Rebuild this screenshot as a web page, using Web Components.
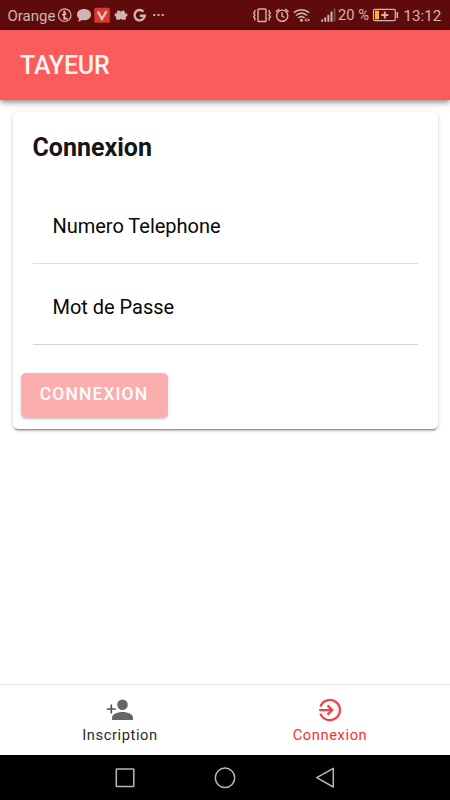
<!DOCTYPE html>
<html lang="fr">
<head>
<meta charset="utf-8">
<title>Tayeur</title>
<style>
html,body{margin:0;height:100%;background:#fff;overflow:hidden}
body{font-family:Roboto,"Liberation Sans",sans-serif;color:#000}
</style>
</head>
<body>
<tayeur-app></tayeur-app>
<script>
const define = (name, html) => {
  const template = document.createElement('template');
  template.innerHTML = html;
  customElements.define(name, class extends HTMLElement {
    constructor() {
      super();
      this.attachShadow({mode: 'open'}).append(template.content.cloneNode(true));
    }
  });
};

define('status-bar', `
<style>
:host{display:flex;justify-content:space-between;height:30px;box-sizing:border-box;padding:0 9.500px 0 7.500px;background:#600b0b;color:#d3b3b3;border-bottom:1px solid #4f0808}
div{display:flex;align-items:center;height:30px}
svg{display:block;flex:none;fill:none;stroke:#d3b3b3;stroke-width:1.4}
.f{fill:#d3b3b3;stroke:none}
span{display:block;white-space:nowrap;line-height:30px}
.op{width:49.500px;font-size:15px;padding-top:2px}
.pc{width:34px;margin-left:2px;font-size:14.700px}
.tm{width:37px;margin-left:4.500px;font-size:15.2px;padding-top:2px}
</style>
<div>
  <span class="op">Orange</span>
  <svg width="110" height="30" viewBox="57 0 110 30">
    <circle cx="64.7" cy="15.2" r="6.3" stroke-width="1.2"/>
    <path d="M64.300 10.500v8.300h3.400M62.300 15l4-1.500" stroke-width="1.900"/>
    <path class="f" d="M84 9c4.2 0 7 2.300 7 5.700S88 20.300 84 20.300l-2-.2-3.700 1.900.7-3.400c-1.200-1-2-2.300-2-3.900C77 11.300 79.800 9 84 9z"/>
    <rect x="94.300" y="7.700" width="15.500" height="15" rx="1.500" fill="#d93a30" stroke="none"/>
    <path d="M97.800 11.500l4.100 7.500 4.700-7.900" stroke="#edc0bd" stroke-width="2.300"/>
    <path class="f" d="M114.700 13.500h2l.3-2.800h3l.8 1.200.8-1.200h3l.3 2.800h2.400v2.500l-1.200.6-.5 3.200h-3.300l-1.300-1-1.300 1h-3.300l-.5-3.200-1.200-.6z"/>
    <path d="M143.400 11.600A5.150 5.150 0 1 0 144.800 15.700H139.800" stroke-width="2.400"/>
    <path class="f" d="M153.300 14h2v2h-2zM157.500 14h2v2h-2zM161.700 14h2v2h-2z"/>
  </svg>
</div>
<div>
  <svg width="84" height="30" viewBox="252 0 84 30">
    <rect x="258" y="9" width="8" height="12.500" rx=".8"/>
    <path d="M254.800 10v2.200l-1.200 1 1.400 1.800-1.400 1.800 1.200 1v2.700M269.200 10v2.200l1.200 1-1.400 1.800 1.400 1.800-1.200 1v2.700"/>
    <circle cx="282.200" cy="15.700" r="5.600"/><path d="M282 12.300v3.700l2.600 1.500M276 11.800l3.200-2.900M285.300 8.900l3.200 2.900"/>
    <path d="M293.800 12.700c4.600-4 10.700-4 15.300 0M296 15.500c3.500-3 7.500-3 11 0M298.300 18c2-1.700 4.300-1.700 6.300 0" stroke-width="1.600"/>
    <circle class="f" cx="301.500" cy="20.300" r="1.500"/>
    <path class="f" d="M306.500 18v4l-2-2zM307.700 18l2.200 2-2.200 2z"/>
    <path class="f" d="M321.200 19.500h1.900v2.300h-1.900zM324.300 17.500h1.900v4.300h-1.900zM327.400 14.800h1.900v7h-1.900zM330.500 11.500h2v10.300h-2z"/>
    <path d="M334.500 8.500v13.300" stroke="#86504f" stroke-width="1.700"/>
  </svg>
  <span class="pc">20 %</span>
  <svg width="27" height="30" viewBox="372 0 27 30">
    <rect x="373.500" y="9.300" width="21.800" height="11.300" rx="1.300" stroke-width="1.200"/>
    <path d="M397.300 12v6" stroke-width="1.500"/>
    <rect x="375" y="10.700" width="4" height="8.600" fill="#ffb51f" stroke="none"/>
    <path d="M381.300 15h7M384.800 11.500v7" stroke-width="2"/>
  </svg>
  <span class="tm">13:12</span>
</div>`);

define('app-header', `
<style>
:host{display:flex;align-items:center;height:70px;box-sizing:border-box;padding:0 20px;background:#fa5c5b;color:#fff;font-size:25px;letter-spacing:-.2px;font-weight:500;position:relative;z-index:1;box-shadow:0 2px 4px -1px rgba(0,0,0,.3),0 4px 5px rgba(0,0,0,.16),0 1px 10px rgba(0,0,0,.12)}
span{color:#fff3f3}
</style><span><slot></slot></span>`);

define('form-card', `
<style>
:host{display:block;box-sizing:border-box;width:425px;height:317px;margin:12px 0 0 12.500px;padding:21px 20px 0;border-radius:5px;background:#fff;box-shadow:0 3px 1px -2px rgba(0,0,0,.3),0 2px 2px rgba(0,0,0,.16),0 1px 5px rgba(0,0,0,.14)}
h1{margin:0 0 28px;font-size:25px;line-height:30px;font-weight:700;color:#151515}
.action{margin:28px 0 0 -12px}
</style>
<h1><slot name="title"></slot></h1><slot></slot><div class="action"><slot name="action"></slot></div>`);

define('form-field', `
<style>
:host{display:flex;height:81px;box-sizing:border-box;align-items:center;padding:6px 20px 0;border-bottom:1px solid #d4d4d4;font-size:20px;letter-spacing:-.02px;color:#080808}
:host([first]){height:73px;padding-top:0;padding-bottom:2px;border-bottom-color:#dedede}
</style><slot></slot>`);

define('raised-button', `
<style>
:host{display:block}
button{display:block;width:147px;height:45px;border:0;border-radius:5px;padding:0 0 3px;background:#fcadad;color:#fff;font:500 17.500px Roboto,sans-serif;letter-spacing:1.100px;text-transform:uppercase;box-shadow:0 2px 2px -1px rgba(0,0,0,.14),0 1px 4px rgba(0,0,0,.12)}
</style><button><slot></slot></button>`);

define('tab-item', `
<style>
:host{display:flex;flex-direction:column;align-items:center;width:210px;color:#2a2a2a;font-size:14.700px;line-height:20px;letter-spacing:.6px}
:host([active]){color:#fb2f2f}
.icon{height:25px;margin:13px 0 2px}
</style><div class="icon"><slot name="icon"></slot></div><span class="text"><slot></slot></span>`);

define('tab-bar', `
<style>
:host{display:flex;justify-content:center;height:71px;box-sizing:border-box;border-top:1px solid #e2e2e2;background:#fff}
</style><slot></slot>`);

define('system-nav', `
<style>
:host{display:flex;justify-content:center;align-items:center;gap:76px;height:45px;background:#000}
svg{width:24px;height:24px;fill:none;stroke:#b8b8b8;stroke-width:1.500}
</style>
<svg viewBox="0 0 24 24"><rect x="3.300" y="3" width="17.500" height="17.500" rx=".5"/></svg>
<svg viewBox="0 0 24 24"><circle cx="12" cy="11.800" r="9.700"/></svg>
<svg viewBox="0 0 24 24"><path d="M20.300 2.300v18.700L3.800 11.700z" stroke-linejoin="round"/></svg>`);

define('tayeur-app', `
<style>
:host{display:flex;flex-direction:column;width:450px;height:800px}
main{flex:1}
svg{display:block}
</style>
<status-bar></status-bar>
<app-header>TAYEUR</app-header>
<main>
  <form-card>
    <span slot="title">Connexion</span>
    <form-field first>Numero Telephone</form-field>
    <form-field>Mot de Passe</form-field>
    <raised-button slot="action">Connexion</raised-button>
  </form-card>
</main>
<tab-bar>
  <tab-item>
    <svg slot="icon" width="28" height="25" viewBox="0 0 28 25" fill="#666"><circle cx="16.500" cy="6.700" r="5.300"/><path d="M6 22v-2.600c0-3.600 7-5.400 10.500-5.400S27 15.800 27 19.400V22z"/><path d="M.8 11h9M5.300 6.500v9" stroke="#555" stroke-width="1.700"/></svg>
    Inscription
  </tab-item>
  <tab-item active>
    <svg slot="icon" width="25" height="25" viewBox="0 0 25 25" fill="none" stroke="#f54242" stroke-width="2.300"><path d="M2.400 8.500A10.100 10.100 0 1 1 2.400 15.600"/><path d="M1.200 12.100h13M9.500 7.400l4.700 4.700-4.700 4.700"/></svg>
    Connexion
  </tab-item>
</tab-bar>
<system-nav></system-nav>`);
</script>
</body>
</html>
